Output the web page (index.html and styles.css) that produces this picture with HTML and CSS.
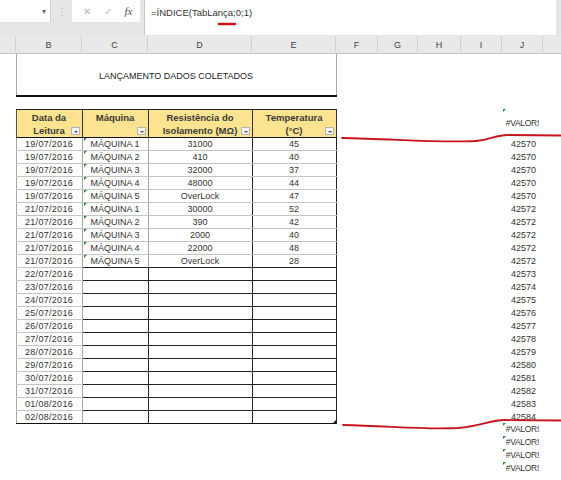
FILE: index.html
```html
<!DOCTYPE html>
<html lang="pt">
<head>
    <meta charset="UTF-8">
    <title>Lançamento dados coletados</title>
    <link rel="stylesheet" href="styles.css">
</head>
<body>
    <div class="toolbar">
        <div class="namebox"><span class="caret">▾</span></div>
        <div class="grip">⋮</div>
        <div class="fxbox">
            <span class="btn">✕</span>
            <span class="btn">✓</span>
            <span class="btn fx">fx</span>
        </div>
        <div class="formula">=ÍNDICE(TabLança;0;1)</div>
    </div>

    <div class="colheads">
        <div></div><div>B</div><div>C</div><div>D</div><div>E</div>
        <div>F</div><div>G</div><div>H</div><div>I</div><div>J</div><div></div>
    </div>

    <table class="sheet">
        <colgroup>
            <col style="width:16px"><col style="width:66px"><col style="width:66px">
            <col style="width:104px"><col style="width:84px"><col style="width:42px">
            <col style="width:40px"><col style="width:43px"><col style="width:41px">
            <col style="width:41px"><col style="width:18px">
        </colgroup>
        <tbody id="rows">
            <tr class="r-title">
                <td></td>
                <td colspan="4" class="title">LANÇAMENTO DADOS COLETADOS</td>
                <td></td><td></td><td></td><td></td><td></td><td></td>
            </tr>
            <tr class="r-gap"><td colspan="11"></td></tr>
            <tr class="r-head">
                <td></td>
                <td class="hd hd-first">Data da<br>Leitura<span class="filter"></span></td>
                <td class="hd">Máquina<span class="filter"></span></td>
                <td class="hd">Resistência do<br>Isolamento (MΩ)<span class="filter"></span></td>
                <td class="hd">Temperatura<br>(°C)<span class="filter"></span></td>
                <td></td><td></td><td></td><td></td>
                <td class="jv err flag">#VALOR!</td>
                <td></td>
            </tr>
        </tbody>
    </table>

    <svg class="marks" width="561" height="480" viewBox="0 0 561 480">
        <path d="M219 24 L235 24" stroke-width="2.6"/>
        <path d="M342 138 C 395 139, 440 143, 476 141 C 491 140, 495 135, 508 135 L 561 135.5"/>
        <path d="M343 425 C 390 426, 425 430, 458 428 C 482 426, 490 420, 505 420 L 561 420.5"/>
    </svg>

    <script>
        const data = [
            ["19/07/2016", "MÁQUINA 1", "31000", "45", 42570],
            ["19/07/2016", "MÁQUINA 2", "410", "40", 42570],
            ["19/07/2016", "MÁQUINA 3", "32000", "37", 42570],
            ["19/07/2016", "MÁQUINA 4", "48000", "44", 42570],
            ["19/07/2016", "MÁQUINA 5", "OverLock", "47", 42570],
            ["21/07/2016", "MÁQUINA 1", "30000", "52", 42572],
            ["21/07/2016", "MÁQUINA 2", "390", "42", 42572],
            ["21/07/2016", "MÁQUINA 3", "2000", "40", 42572],
            ["21/07/2016", "MÁQUINA 4", "22000", "48", 42572],
            ["21/07/2016", "MÁQUINA 5", "OverLock", "28", 42572]
        ];
        const empty = ["22/07", "23/07", "24/07", "25/07", "26/07", "27/07",
                       "28/07", "29/07", "30/07", "31/07", "01/08", "02/08"];
        const body = document.getElementById("rows");

        function addRow(cells, cls) {
            const tr = document.createElement("tr");
            tr.className = cls;
            tr.innerHTML = cells;
            body.appendChild(tr);
        }

        const blank = "<td></td><td></td><td></td><td></td>";

        data.forEach((row, i) => {
            const last = i === data.length - 1 ? " last-fill" : "";
            addRow(`<td></td>
                <td class="b">${row[0]}</td>
                <td class="c m flag">${row[1]}</td>
                <td class="c">${row[2]}</td>
                <td class="c">${row[3]}</td>
                ${blank}<td class="jv">${row[4]}</td><td></td>`, "r-data" + last);
        });

        empty.forEach((d, i) => {
            const last = i === empty.length - 1 ? " last-row" : "";
            addRow(`<td></td>
                <td class="b">${d}/2016</td>
                <td class="c m"></td><td class="c"></td><td class="c e-end"></td>
                ${blank}<td class="jv">${42573 + i}</td><td></td>`, "r-empty" + last);
        });

        for (let i = 0; i < 4; i++) {
            addRow(`<td></td><td></td><td></td><td></td><td></td>
                ${blank}<td class="jv err flag">#VALOR!</td><td></td>`, "r-err");
        }
    </script>
</body>
</html>
```

FILE: styles.css
```css
* {
    box-sizing: border-box;
    margin: 0;
    padding: 0;
}

body {
    position: relative;
    width: 561px;
    height: 480px;
    overflow: hidden;
    background: white;
    font-family: "Liberation Sans", Arial, sans-serif;
    font-size: 9px;
    color: #333;
}

/* formula bar */
.toolbar {
    display: flex;
    height: 36px;
    background: #e6e6e6;
}

.namebox {
    width: 51px;
    height: 22px;
    background: white;
    border-right: 1px solid #cfcfcf;
    display: flex;
    justify-content: flex-end;
    align-items: center;
    padding-right: 4px;
}

.caret {
    font-size: 8px;
    color: #666;
}

.grip {
    width: 21px;
    height: 22px;
    display: flex;
    justify-content: center;
    align-items: center;
    color: #b0b0b0;
    font-size: 10px;
}

.fxbox {
    width: 68px;
    height: 22px;
    background: white;
    display: flex;
    align-items: center;
    padding-left: 4px;
}

.btn {
    width: 21px;
    text-align: center;
    color: #b5b5b5;
    font-size: 10px;
}

.fx {
    font-family: "Liberation Serif", serif;
    font-style: italic;
    color: #555;
    font-size: 11px;
}

.formula {
    margin-left: 4px;
    width: 412px;
    height: 35px;
    background: white;
    border-left: 1px solid #c8c8c8;
    padding: 7px 0 0 6px;
    color: #333;
    font-size: 9.5px;
}

/* column letters */
.colheads {
    display: grid;
    grid-template-columns: 16px 66px 66px 104px 84px 42px 40px 43px 41px 41px 18px;
    height: 18px;
    background: #e9e9e9;
    border-bottom: 1px solid #c3c3c3;
}

.colheads div {
    border-right: 1px solid #d2d2d2;
    text-align: center;
    line-height: 18px;
    color: #444;
    font-size: 9px;
}

.colheads div:last-child {
    border-right: none;
}

/* sheet */
.sheet {
    table-layout: fixed;
    border-collapse: collapse;
    width: 561px;
}

.sheet td {
    padding: 0;
    height: 12.9px;
    line-height: 12px;
    white-space: nowrap;
}

.r-title td {
    height: 42px;
}

.title {
    text-align: center;
    border-left: 1px solid #a6a6a6;
    border-right: 1px solid #a6a6a6;
    border-bottom: 2px solid #111;
    color: #222;
    font-size: 9px;
    padding-top: 2px !important;
}

.r-gap td {
    height: 13px;
}

.r-head td {
    height: 28px;
}

.hd {
    position: relative;
    background: #fbe38f;
    border-top: 1px solid #222;
    border-right: 1px solid #333;
    border-bottom: 1px solid #111;
    text-align: center;
    vertical-align: top;
    font-weight: bold;
    color: #3a3a3a;
    line-height: 13px !important;
    padding-top: 1px !important;
    font-size: 9.5px;
}

.hd-first {
    border-left: 1px solid #555;
}

.filter {
    position: absolute;
    right: 2px;
    bottom: 2px;
    width: 9px;
    height: 8px;
    background: #f4f4f4;
    border: 1px solid #b5b5b5;
}

.filter::after {
    content: "";
    position: absolute;
    left: 2px;
    top: 3px;
    border-left: 2px solid transparent;
    border-right: 2px solid transparent;
    border-top: 2px solid #555;
}

.b {
    text-align: center;
    border-left: 1px solid #a6a6a6;
    border-right: 1px solid #a6a6a6;
    border-bottom: 1px solid #c4c4c4;
    letter-spacing: 0.3px;
}

.c {
    text-align: center;
    border-right: 1px solid #222;
    border-bottom: 1px solid #c4c4c4;
}

.r-data .m {
    border-right-color: #a6a6a6;
}

.r-data.last-fill .c,
.r-empty .c {
    border-bottom-color: #222;
}

.r-empty.last-row .b,
.r-empty.last-row .c {
    border-bottom: 1px solid #111;
}

.r-empty.last-row .e-end {
    position: relative;
}

.r-empty.last-row .e-end::after {
    content: "";
    position: absolute;
    right: 0;
    bottom: 0;
    border-left: 3px solid transparent;
    border-bottom: 3px solid #222;
}

.jv {
    text-align: right;
    padding-right: 7px !important;
    color: #333;
}

.err {
    padding-right: 4px !important;
    font-size: 8.5px;
    letter-spacing: -0.3px;
}

.flag {
    position: relative;
}

.flag::before {
    content: "";
    position: absolute;
    top: 0;
    left: 1px;
    border-top: 3px solid #2f8a2f;
    border-right: 3px solid transparent;
}

.marks {
    position: absolute;
    top: 0;
    left: 0;
    pointer-events: none;
    fill: none;
    stroke: #c8141c;
    stroke-width: 1.8;
    stroke-linecap: round;
}
```
